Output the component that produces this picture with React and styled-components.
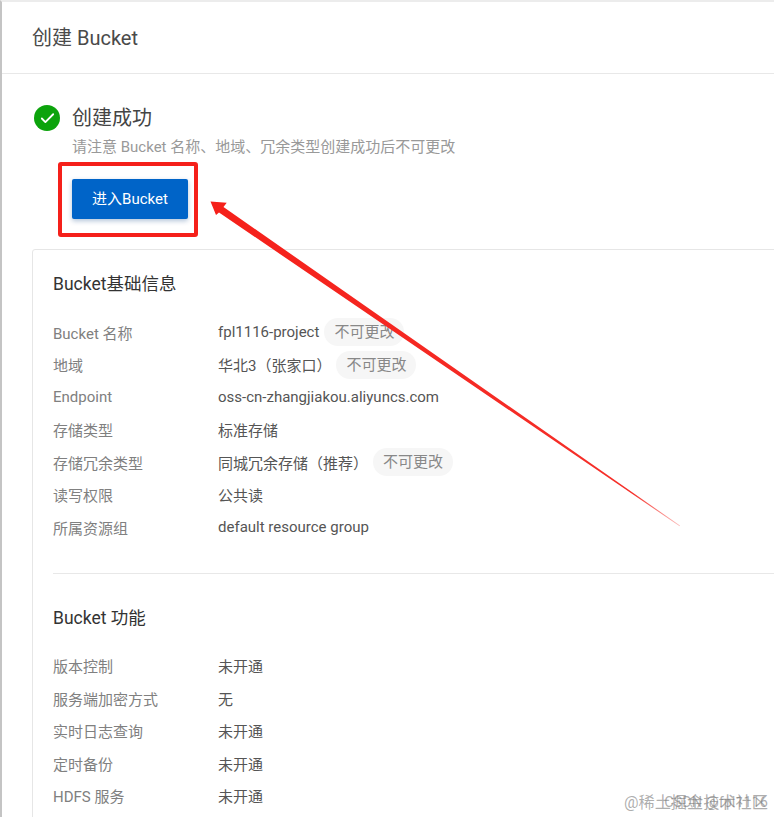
import React from "react";
import styled, { createGlobalStyle } from "styled-components";
import { Check } from "lucide-react";

const basicRows = [
  { label: "Bucket 名称", value: "fpl1116-project", locked: true },
  { label: "地域", value: "华北3（张家口）", locked: true },
  { label: "Endpoint", value: "oss-cn-zhangjiakou.aliyuncs.com" },
  { label: "存储类型", value: "标准存储" },
  { label: "存储冗余类型", value: "同城冗余存储（推荐）", locked: true },
  { label: "读写权限", value: "公共读" },
  { label: "所属资源组", value: "default resource group" },
];

const featureRows = [
  { label: "版本控制", value: "未开通" },
  { label: "服务端加密方式", value: "无" },
  { label: "实时日志查询", value: "未开通" },
  { label: "定时备份", value: "未开通" },
  { label: "HDFS 服务", value: "未开通" },
];

const InfoRows = ({ rows }) => (
  <RowList>
    {rows.map((row) => (
      <Row key={row.label}>
        <Label>{row.label}</Label>
        <Value>{row.value}</Value>
        {row.locked && <Pill>不可更改</Pill>}
      </Row>
    ))}
  </RowList>
);

const App = () => {
  return (
    <Page>
      <GlobalStyle />
      <Header>创建 Bucket</Header>
      <Main>
        <Result>
          <SuccessIcon>
            <Check size={17} strokeWidth={2.6} color="#fff" />
          </SuccessIcon>
          <ResultText>
            <ResultTitle>创建成功</ResultTitle>
            <ResultHint>请注意 Bucket 名称、地域、冗余类型创建成功后不可更改</ResultHint>
            <EnterButton>进入Bucket</EnterButton>
          </ResultText>
        </Result>
        <Card>
          <SectionTitle>Bucket基础信息</SectionTitle>
          <InfoRows rows={basicRows} />
          <Divider />
          <SectionTitle>Bucket 功能</SectionTitle>
          <InfoRows rows={featureRows} />
        </Card>
      </Main>
      <RedBox />
      <Arrow viewBox="0 0 774 817">
        <defs>
          <linearGradient id="arrowFade" gradientUnits="userSpaceOnUse" x1="210" y1="201" x2="680" y2="526">
            <stop offset="0" stopColor="#f5201a" />
            <stop offset="0.9" stopColor="#f5302a" />
            <stop offset="1" stopColor="#f5302a" stopOpacity="0.3" />
          </linearGradient>
        </defs>
        <polygon
          fill="url(#arrowFade)"
          points="210.5,201.5 226.7,202.7 223.5,207 680,525.6 679.6,526.2 219,212.5 216,215"
        />
      </Arrow>
      <Watermark>@稀土掘金技术社区</Watermark>
      <Watermark $small>CSDN @fpl1116</Watermark>
    </Page>
  );
};

export default App;

const GlobalStyle = createGlobalStyle`
  html, body {
    margin: 0;
    padding: 0;
    background: #fff;
  }
`;

const Page = styled.div`
  position: relative;
  width: 774px;
  height: 817px;
  overflow: hidden;
  box-sizing: border-box;
  border-left: 2px solid #c4c4c4;
  border-top: 2px solid #ececec;
  background: #fff;
  color: #333;
  font-family: Roboto, "Noto Sans CJK SC", sans-serif;
  font-size: 15px;
`;

const Header = styled.div`
  height: 72px;
  box-sizing: border-box;
  border-bottom: 1px solid #e8e8e8;
  padding: 0 0 3px 30px;
  display: flex;
  align-items: center;
  font-size: 20px;
  color: #4a4a4a;
`;

const Main = styled.div`
  padding: 29px 0 0 30px;
  width: 900px;
`;

const Result = styled.div`
  display: flex;
  align-items: flex-start;
  gap: 12px;
  padding-left: 2px;
`;

const SuccessIcon = styled.div`
  width: 26px;
  height: 26px;
  margin-top: 2px;
  border-radius: 50%;
  background: #0ca30c;
  display: flex;
  align-items: center;
  justify-content: center;
`;

const ResultText = styled.div`
  display: flex;
  flex-direction: column;
  align-items: flex-start;
`;

const ResultTitle = styled.div`
  font-size: 20px;
  line-height: 30px;
  color: #444;
`;

const ResultHint = styled.div`
  margin-top: 1px;
  font-size: 15px;
  line-height: 26px;
  color: #999;
`;

const EnterButton = styled.button`
  margin-top: 19px;
  width: 116px;
  height: 40px;
  border: none;
  border-radius: 2px;
  background: #0064c8;
  box-shadow: 0 2px 5px rgba(0, 60, 130, 0.3);
  color: #fff;
  font-family: inherit;
  font-size: 15px;
  padding: 0 0 3px;
`;

const Card = styled.div`
  margin-top: 30px;
  border: 1px solid #e6e6e6;
  border-radius: 3px;
  padding: 20px 20px 40px;
`;

const SectionTitle = styled.div`
  font-size: 17.5px;
  line-height: 28px;
  color: #333;
`;

const RowList = styled.div`
  margin-top: 18px;
  display: flex;
  flex-direction: column;
`;

const Row = styled.div`
  height: 32.5px;
  display: flex;
  align-items: center;
`;

const Label = styled.div`
  width: 165px;
  flex: none;
  color: #808080;
`;

const Value = styled.div`
  color: #555;
`;

const Pill = styled.div`
  margin-left: 5px;
  height: 28px;
  padding: 0 10px;
  border-radius: 14px;
  background: #f6f6f6;
  color: #888;
  line-height: 28px;
`;

const Divider = styled.div`
  margin: 29px 0 30px;
  width: 780px;
  border-top: 1px solid #e8e8e8;
`;

const RedBox = styled.div`
  position: absolute;
  left: 56px;
  top: 160px;
  width: 140px;
  height: 75px;
  box-sizing: border-box;
  border: 4px solid #f5201a;
  border-radius: 3px;
`;

const Arrow = styled.svg`
  position: absolute;
  left: -2px;
  top: -2px;
  width: 774px;
  height: 817px;
  pointer-events: none;
`;

const Watermark = styled.div`
  position: absolute;
  right: 6px;
  top: 791px;
  font-size: ${(p) => (p.$small ? "14.5px" : "16.2px")};
  line-height: 20px;
  white-space: nowrap;
  color: rgba(120, 120, 120, 0.6);
`;
